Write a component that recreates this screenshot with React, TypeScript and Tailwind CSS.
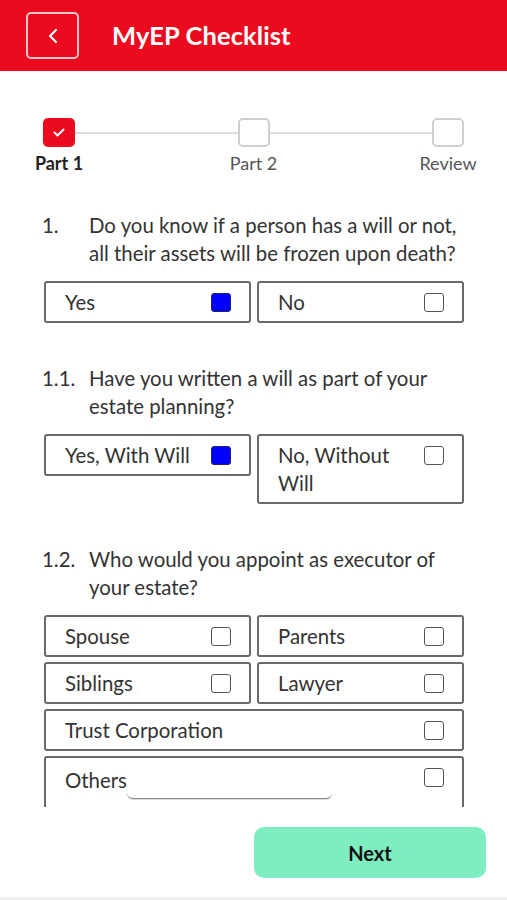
import { useState } from 'react';

interface Option {
  label: string;
  checked?: boolean;
  full?: boolean;
  input?: boolean;
}

interface Question {
  num: string;
  text: string;
  options: Option[];
}

const questions: Question[] = [
  {
    num: '1.',
    text: 'Do you know if a person has a will or not, all their assets will be frozen upon death?',
    options: [{ label: 'Yes', checked: true }, { label: 'No' }],
  },
  {
    num: '1.1.',
    text: 'Have you written a will as part of your estate planning?',
    options: [{ label: 'Yes, With Will', checked: true }, { label: 'No, Without Will' }],
  },
  {
    num: '1.2.',
    text: 'Who would you appoint as executor of your estate?',
    options: [
      { label: 'Spouse' },
      { label: 'Parents' },
      { label: 'Siblings' },
      { label: 'Lawyer' },
      { label: 'Trust Corporation', full: true },
      { label: 'Others', full: true, input: true },
    ],
  },
];

function Checkbox({ checked }: { checked?: boolean }) {
  return (
    <span
      className={
        checked
          ? 'mt-[4.5px] block w-[20px] h-[19px] shrink-0 rounded-[3px] border-[1.5px] border-[#222266] bg-[#0000ff]'
          : 'mt-[4.5px] block w-[20px] h-[19px] shrink-0 rounded-[3px] border-[1.5px] border-[#555] bg-white'
      }
    />
  );
}

function OptionBox({ option }: { option: Option }) {
  const [checked, setChecked] = useState(!!option.checked);
  return (
    <div
      onClick={() => setChecked(!checked)}
      className={`flex items-start gap-[10px] border-2 border-[#6a6a6a] rounded-[3px] bg-white pl-[19px] pr-[18.5px] py-[5px] cursor-pointer ${
        option.full ? 'col-span-2' : ''
      }`}
    >
      <div className="flex-1 flex items-start text-[20.4px] leading-[28px] text-[#333]">
        <span className={option.input ? 'mt-[3px]' : ''}>{option.label}</span>
        {option.input && (
          <span className="block w-[205px] h-[36px] mb-[12px] border-b-[1.5px] border-[#8a8a8a] rounded-b-[6px] shadow-[0_1px_1px_rgba(0,0,0,0.15)]" />
        )}
      </div>
      <Checkbox checked={checked} />
    </div>
  );
}

function Stepper() {
  return (
    <div className="pt-[47px]">
      <div className="flex items-center px-[43px]">
        <div className="w-[32px] h-[29px] rounded-[5px] bg-[#ec0b1e] flex items-center justify-center">
          <svg width="14" height="11" viewBox="0 0 14 11" fill="none">
            <polyline points="2.5,5.5 5.5,8.5 11.5,2.5" stroke="white" strokeWidth="2" strokeLinecap="round" strokeLinejoin="round" />
          </svg>
        </div>
        <div className="flex-1 h-[2px] bg-[#dcdcdc]" />
        <div className="w-[32px] h-[29px] rounded-[5px] border-2 border-[#cfcfcf] bg-white" />
        <div className="flex-1 h-[2px] bg-[#dcdcdc]" />
        <div className="w-[32px] h-[29px] rounded-[5px] border-2 border-[#cfcfcf] bg-white" />
      </div>
      <div className="flex justify-between px-[27px] mt-[5px] text-[18px] leading-[22px]">
        <span className="w-[64px] text-center font-bold text-[#222]">Part 1</span>
        <span className="w-[64px] text-center text-[#555]">Part 2</span>
        <span className="w-[64px] text-center text-[#555]">Review</span>
      </div>
    </div>
  );
}

export default function App() {
  return (
    <div className="h-[900px] w-full flex flex-col bg-white font-['Lato','Liberation_Sans',sans-serif]">
      <header className="h-[71px] shrink-0 bg-[#ec0b1e] flex items-center pl-[26px] gap-[33px]">
        <button className="w-[53px] h-[47px] rounded-[5px] border-2 border-[#f6c7cb] flex items-center justify-center">
          <svg width="12" height="16" viewBox="0 0 12 16" fill="none">
            <polyline points="9,2 3,8 9,14" stroke="white" strokeWidth="2.2" strokeLinecap="round" strokeLinejoin="round" />
          </svg>
        </button>
        <h1 className="text-white font-bold text-[25.5px] tracking-[0.1px]">MyEP Checklist</h1>
      </header>

      <main className="flex-1 overflow-hidden">
        <Stepper />
        <div className="pt-[37px]">
          {questions.map((q, i) => (
            <section key={q.num} className={i > 0 ? 'mt-[41px]' : ''}>
              <div className="flex pl-[42px] pr-[40px] text-[20.4px] leading-[28px] text-[#333]">
                <span className="w-[47px] shrink-0">{q.num}</span>
                <p>{q.text}</p>
              </div>
              <div className="grid grid-cols-2 gap-x-[6px] gap-y-[5px] pl-[44px] pr-[43px] mt-[14px] items-start">
                {q.options.map((o) => (
                  <OptionBox key={o.label} option={o} />
                ))}
              </div>
            </section>
          ))}
        </div>
      </main>

      <footer className="h-[93px] shrink-0 flex flex-col">
        <div className="flex-1 flex justify-end pt-[20px] pr-[21px]">
          <button className="w-[232px] h-[51px] rounded-[10px] bg-[#7eedbf] text-[20px] font-bold text-[#111]">
            Next
          </button>
        </div>
        <div className="h-[3px] bg-[#efefef]" />
      </footer>
    </div>
  );
}
